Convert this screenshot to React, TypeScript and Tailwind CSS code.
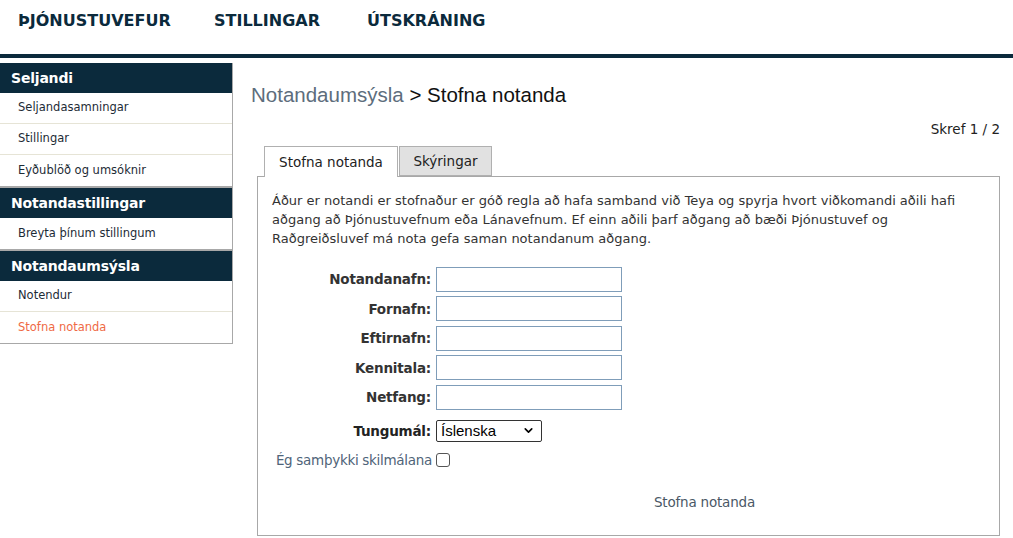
import { ChevronDown } from "lucide-react";

const tahoma = { fontFamily: '"DejaVu Sans", Verdana, sans-serif' };

const sidebar = [
  {
    title: "Seljandi",
    items: ["Seljandasamningar", "Stillingar", "Eyðublöð og umsóknir"],
  },
  { title: "Notandastillingar", items: ["Breyta þínum stillingum"] },
  { title: "Notandaumsýsla", items: ["Notendur", "Stofna notanda"] },
];

const fields = ["Notandanafn:", "Fornafn:", "Eftirnafn:", "Kennitala:", "Netfang:"];

export default function App() {
  return (
    <div className="w-[1013px] h-[538px] overflow-hidden bg-white text-[#333]" style={tahoma}>
      {/* Top navigation */}
      <div className="h-[54px] flex items-start pt-[9px] pl-[18px] text-[16px] font-bold text-[#0b2a3c]">
        <span className="w-[196px]">ÞJÓNUSTUVEFUR</span>
        <span className="w-[153px]">STILLINGAR</span>
        <span>ÚTSKRÁNING</span>
      </div>
      <div className="h-[4px] bg-[#0b2a3c]" />

      <div className="flex pt-[5px]">
        {/* Sidebar */}
        <div className="w-[233px] shrink-0 self-start border-r border-b border-[#a8a8a8]">
          {sidebar.map((group, gi) => (
            <div key={gi} className={gi > 0 ? "border-t-2 border-[#a8a8a8]" : ""}>
              <div className="h-[30px] bg-[#0b2a3c] text-white font-bold text-[14px] pl-[11px] pt-[1px] flex items-center tracking-[-0.2px]">
                {group.title}
              </div>
              {group.items.map((item, ii) => (
                <div
                  key={ii}
                  className={`h-[31px] flex items-center pl-[18px] text-[11.5px] ${
                    ii < group.items.length - 1 ? "border-b border-[#e6e4d6]" : ""
                  } ${item === "Stofna notanda" ? "text-[#ef6a45] pl-[17px]" : "text-[#1d2b36]"}`}
                >
                  {item}
                </div>
              ))}
            </div>
          ))}
        </div>

        {/* Main content */}
        <div className="flex-1 pl-[18px] pr-[13px]">
          <div
            className="pt-[17px] text-[20.5px]"
            style={{ fontFamily: '"Liberation Sans", Arial, sans-serif' }}
          >
            <span className="text-[#5d6d7c]">Notandaumsýsla</span>
            <span className="text-[#111]"> &gt; Stofna notanda</span>
          </div>

          <div className="text-right text-[13.5px] text-[#222] mt-[9px] leading-[18px]">Skref 1 / 2</div>

          <div className="ml-[6px] mt-[7px]">
            {/* Tabs */}
            <div className="flex pl-[7px] h-[31px] items-end">
              <div className="h-[31px] w-[134px] flex items-center justify-center text-[13.5px] border border-b-0 border-[#b0b0b0] bg-white relative top-[1px] text-[#222]">
                Stofna notanda
              </div>
              <div className="h-[30px] w-[93px] ml-[1px] flex items-center justify-center text-[13.5px] border border-[#b0b0b0] bg-[#e1e1e1] text-[#222]">
                Skýringar
              </div>
            </div>

            {/* Panel */}
            <div className="border border-[#a8a8a8] h-[360px] px-[14px] pt-[14px]">
              <p className="text-[13px] leading-[19px] text-[#333]">
                Áður er notandi er stofnaður er góð regla að hafa samband við Teya og spyrja hvort viðkomandi aðili hafi
                aðgang að Þjónustuvefnum eða Lánavefnum. Ef einn aðili þarf aðgang að bæði Þjónustuvef og
                Raðgreiðsluvef má nota gefa saman notandanum aðgang.
              </p>

              <div className="mt-[19px] flex flex-col gap-[4.5px]">
                {fields.map((f) => (
                  <div key={f} className="flex items-center">
                    <label className="w-[164px] text-right pr-[5px] font-bold text-[13.5px] text-[#333] tracking-[-0.2px]">
                      {f}
                    </label>
                    <input className="w-[186px] h-[25px] border border-[#7f9db9] bg-white" />
                  </div>
                ))}
              </div>

              <div className="flex items-center mt-[10px]">
                <label className="w-[164px] text-right pr-[5px] font-bold text-[13.5px] text-[#222] tracking-[-0.2px]">
                  Tungumál:
                </label>
                <div className="w-[106px] h-[22px] border border-[#333] rounded-[2px] flex items-center justify-between pl-[4px] pr-[6px] text-[15px] text-black">
                  <span style={{ fontFamily: '"Liberation Sans", Arial, sans-serif' }}>Íslenska</span>
                  <ChevronDown className="w-[13px] h-[13px]" strokeWidth={3} />
                </div>
              </div>

              <div className="flex items-center mt-[8px]">
                <span className="w-[164px] text-right pr-[4px] text-[13.5px] text-[#4f6479] tracking-[-0.3px] whitespace-nowrap">
                  Ég samþykki skilmálana
                </span>
                <span className="w-[14px] h-[14px] border border-[#555] rounded-[3px] bg-white" />
              </div>

              <div className="mt-[22px] pl-[382px] text-[13.5px] text-[#4a5866] tracking-[-0.2px]">Stofna notanda</div>
            </div>
          </div>
        </div>
      </div>
    </div>
  );
}
